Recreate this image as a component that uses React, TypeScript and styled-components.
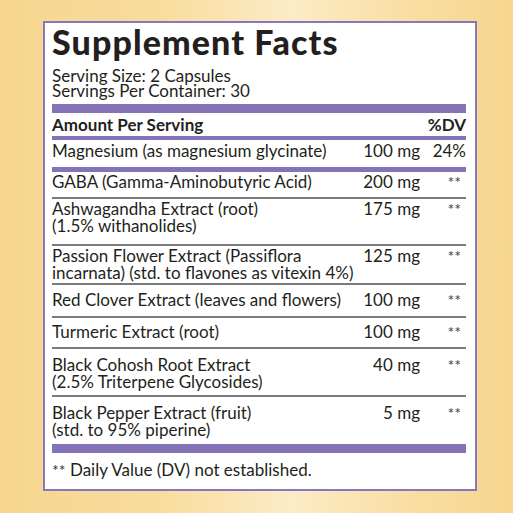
import { FC } from "react";
import styled, { createGlobalStyle } from "styled-components";

const GlobalStyle = createGlobalStyle`
    html, body {
        margin: 0;
        padding: 0;
    }
    body {
        width: 513px;
        height: 513px;
        overflow: hidden;
        font-family: Lato, "Open Sans", sans-serif;
        color: #231f20;
        background: linear-gradient(90deg, #f6d68e 0%, #f8dc9c 30%, #fcebc6 57%, #f9dea2 80%, #f6d68e 100%);
    }
`;

interface Ingredient {
    name: string[];
    amount: string;
    h: number;
    top: number;
}

const ingredients: Ingredient[] = [
    { name: ["GABA (Gamma-Aminobutyric Acid)"], amount: "200 mg", h: 25, top: 1 },
    { name: ["Ashwagandha Extract (root)", "(1.5% withanolides)"], amount: "175 mg", h: 45, top: 1 },
    { name: ["Passion Flower Extract (Passiflora", "incarnata) (std. to flavones as vitexin 4%)"], amount: "125 mg", h: 37, top: 1 },
    { name: ["Red Clover Extract (leaves and flowers)"], amount: "100 mg", h: 31, top: 6 },
    { name: ["Turmeric Extract (root)"], amount: "100 mg", h: 29, top: 5 },
    { name: ["Black Cohosh Root Extract", "(2.5% Triterpene Glycosides)"], amount: "40 mg", h: 46, top: 7 },
    { name: ["Black Pepper Extract (fruit)", "(std. to 95% piperine)"], amount: "5 mg", h: 47, top: 7 },
];

const App: FC = () => {
    return <>
        <GlobalStyle />
        <Page>
            <Label>
                <Title>Supplement Facts</Title>
                <Serving>
                    <div>Serving Size: 2 Capsules</div>
                    <div>Servings Per Container: 30</div>
                </Serving>
                <Bar size={9} gap={6} />
                <HeadRow>
                    <span>Amount Per Serving</span>
                    <span>%DV</span>
                </HeadRow>
                <Bar size={4} gap={0} />
                <Row h={27} top={2}>
                    <Name>Magnesium (as magnesium glycinate)</Name>
                    <Amount>100 mg</Amount>
                    <Dv>24%</Dv>
                </Row>
                <Bar size={5} gap={0} />
                {ingredients.map((item, i) => (
                    <div key={item.name[0]}>
                        <Row h={item.h} top={item.top}>
                            <Name>
                                {item.name.map((line) => <div key={line}>{line}</div>)}
                            </Name>
                            <Amount>{item.amount}</Amount>
                            <Stars>**</Stars>
                        </Row>
                        {i < ingredients.length - 1 ? <Rule /> : <Bar size={9} gap={0} />}
                    </div>
                ))}
                <Footnote><FootStars>**</FootStars> Daily Value (DV) not established.</Footnote>
            </Label>
        </Page>
    </>;
};

const Page = styled.div`
    padding: 21px 0 0 43px;
`;

const Label = styled.div`
    width: 414px;
    height: 466px;
    border: 2px solid #8678c0;
    background-color: #fff;
    padding: 0 9px 0 7px;
    box-sizing: content-box;
`;

const Title = styled.div`
    font-size: 34px;
    font-weight: 900;
    line-height: 34px;
    padding-top: 2px;
    letter-spacing: 1.1px;
    color: #231f20;
`;

const Serving = styled.div`
    font-size: 17px;
    line-height: 15px;
    margin-top: 9px;
`;

const Bar = styled.div<{ size: number; gap: number }>`
    height: ${props => props.size}px;
    background-color: #8473b6;
    margin-top: ${props => props.gap}px;
`;

const HeadRow = styled.div`
    display: flex;
    justify-content: space-between;
    align-items: flex-start;
    font-size: 17px;
    font-weight: 700;
    height: 23px;
    line-height: 17px;
    padding-top: 3px;
    box-sizing: border-box;
`;

const Row = styled.div<{ h: number; top: number }>`
    display: grid;
    grid-template-columns: minmax(0, 1fr) 80px 46px;
    align-items: baseline;
    height: ${props => props.h}px;
    padding-top: ${props => props.top}px;
    box-sizing: border-box;
    font-size: 17px;
    line-height: 17px;
`;

const Name = styled.div`
    white-space: nowrap;
`;

const Amount = styled.div`
    text-align: right;
`;

const Dv = styled.div`
    text-align: right;
`;

const Stars = styled.div`
    text-align: right;
    padding-right: 5px;
    font-size: 16px;
    color: #444;
`;

const Rule = styled.div`
    height: 2px;
    background-color: #7a7a7a;
`;

const Footnote = styled.div`
    font-size: 17px;
    line-height: 17px;
    padding-top: 8px;
`;

const FootStars = styled.span`
    font-size: 16px;
    color: #333;
`;

export default App;
